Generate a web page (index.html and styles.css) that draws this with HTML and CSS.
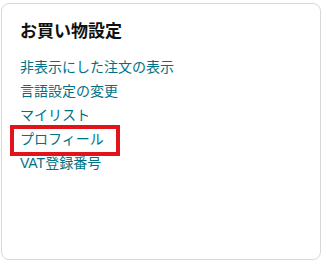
FILE: index.html
```html
<!DOCTYPE html>
<html lang="ja">
<head>
    <meta charset="UTF-8">
    <meta name="viewport" content="width=device-width, initial-scale=1.0">
    <title>お買い物設定</title>
    <link rel="stylesheet" href="styles.css">
</head>
<body>
    <div class="card">
        <h2 class="card-title">お買い物設定</h2>
        <ul class="link-list">
            <li><a href="#">非表示にした注文の表示</a></li>
            <li><a href="#">言語設定の変更</a></li>
            <li><a href="#">マイリスト</a></li>
            <li class="highlighted"><a href="#">プロフィール</a></li>
            <li><a href="#">VAT登録番号</a></li>
        </ul>
    </div>
</body>
</html>
```

FILE: styles.css
```css
body {
    margin: 0;
    background-color: #ffffff;
    font-family: "Liberation Sans", "Noto Sans CJK JP", sans-serif;
}
.card {
    box-sizing: border-box;
    width: 320px;
    height: 257px;
    margin: 3px 0 0 1px;
    padding: 16px 18px;
    border: 1px solid #d5d9d9;
    border-radius: 8px;
}
.card-title {
    margin: 0 0 11px 0;
    font-size: 17px;
    line-height: 24px;
    font-weight: 700;
    color: #0f1111;
}
.link-list {
    list-style-type: none;
    margin: 0;
    padding: 0;
}
.link-list li {
    font-size: 14px;
    line-height: 24px;
}
.link-list a {
    color: #007185;
    text-decoration: none;
}
.highlighted {
    position: relative;
}
.highlighted::after {
    content: "";
    position: absolute;
    left: -10px;
    top: -2px;
    width: 110px;
    height: 31px;
    box-sizing: border-box;
    border: 4px solid #e3131b;
}
```
